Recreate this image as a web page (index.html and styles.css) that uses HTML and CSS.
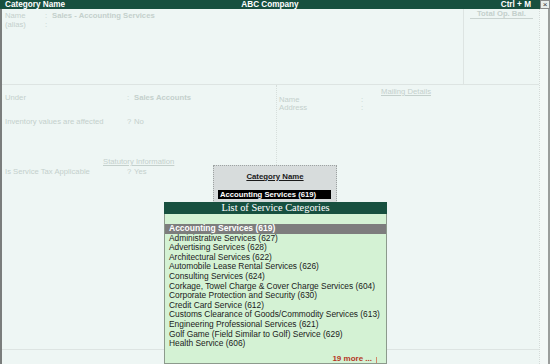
FILE: index.html
```html
<!DOCTYPE html>
<html lang="en">

<head>
  <meta charset="UTF-8">
  <meta name="viewport" content="width=device-width, initial-scale=1.0">
  <title>Category Name</title>
  <link rel="stylesheet" href="styles.css">
</head>

<body>
  <div class="titlebar">
    <span class="tb-left">Category Name</span>
    <span class="tb-center">ABC Company</span>
    <span class="tb-right">Ctrl + M</span>
    <span class="tb-close">&#215;</span>
  </div>

  <div class="screen">
    <div class="main">
      <div class="top">
        <div class="name-block">
          <div class="field"><span class="label short">Name</span><span class="mark">:</span><span class="value bold">Sales - Accounting Services</span></div>
          <div class="field"><span class="label short">(alias)</span><span class="mark">:</span><span class="value"></span></div>
        </div>
        <div class="balance-block">
          <span class="u-head">Total Op. Bal.</span>
        </div>
      </div>

      <div class="mid">
        <div class="group-block">
          <div class="field first"><span class="label">Under</span><span class="mark">:</span><span class="value bold">Sales Accounts</span></div>
          <div class="field"><span class="label">Inventory values are affected</span><span class="mark">?</span><span class="value">No</span></div>
          <div class="section-title"><span class="u-text">Statutory Information</span></div>
          <div class="field"><span class="label">Is Service Tax Applicable</span><span class="mark">?</span><span class="value">Yes</span></div>
        </div>
        <div class="mailing-block">
          <div class="mailing-title"><span class="u-text">Mailing Details</span></div>
          <div class="mfield"><span class="mlabel">Name</span><span>:</span></div>
          <div class="mfield"><span class="mlabel">Address</span><span>:</span></div>
        </div>
      </div>

      <div class="foot"></div>
    </div>
    <div class="side"></div>
  </div>

  <!-- popup shown over the form -->
  <div class="cat-popup">
    <div class="cat-title">Category Name</div>
    <div class="cat-input">Accounting Services (619)</div>
  </div>

  <div class="svc-list">
    <div class="svc-head">List of Service Categories</div>
    <ul class="svc-items">
      <li class="selected">Accounting Services (619)</li>
      <li>Administrative Services (627)</li>
      <li>Advertising Services (628)</li>
      <li>Architectural Services (622)</li>
      <li>Automobile Lease Rental Services (626)</li>
      <li>Consulting Services (624)</li>
      <li>Corkage, Towel Charge &amp; Cover Charge Services (604)</li>
      <li>Corporate Protection and Security (630)</li>
      <li>Credit Card Service (612)</li>
      <li>Customs Clearance of Goods/Commodity Services (613)</li>
      <li>Engineering Professional Services (621)</li>
      <li>Golf Game (Field Similar to Golf) Service (629)</li>
      <li>Health Service (606)</li>
    </ul>
    <div class="svc-more">19 more ...</div>
    <div class="svc-tick"></div>
  </div>
</body>

</html>
```

FILE: styles.css
```css
body {
  margin: 0;
  width: 550px;
  height: 364px;
  overflow: hidden;
  position: relative;
  font-family: "Liberation Sans", Arial, sans-serif;
  background: #eef6f4;
}

.titlebar {
  height: 9px;
  display: grid;
  grid-template-columns: 1fr auto 1fr 10px;
  background-color: #17503f;
  color: white;
  font-size: 8.2px;
  font-weight: bold;
  line-height: 9px;
}

.tb-left {
  padding-left: 5px;
}

.tb-right {
  text-align: right;
  padding-right: 9px;
}

.tb-close {
  background: #e8ecea;
  color: #333;
  border: 1px solid #8a8a8a;
  box-sizing: border-box;
  font-size: 8px;
  line-height: 7px;
  text-align: center;
  font-weight: normal;
}

.screen {
  display: flex;
  height: 355px;
}

.main {
  width: 539px;
  border-left: 2px solid #7a7d7c;
  box-sizing: border-box;
  display: flex;
  flex-direction: column;
  color: #c4d0cc;
  font-size: 7.7px;
}

.top {
  height: 75px;
  display: grid;
  grid-template-columns: 461px 1fr;
  border-bottom: 1px solid #dde4e2;
}

.name-block {
  padding: 2px 0 0 3px;
}

.field {
  display: flex;
  line-height: 9px;
  white-space: nowrap;
}

.label {
  width: 122px;
}

.label.short {
  width: 40px;
}

.mark {
  width: 5px;
}

.value {
  padding-left: 2px;
}

.bold {
  font-weight: bold;
}

.balance-block {
  border-left: 1px solid #dde4e2;
  text-align: center;
  line-height: 9px;
}

.u-head {
  display: inline-block;
  width: 63px;
  font-weight: bold;
  border-bottom: 1px solid #c9d3d0;
  line-height: 8px;
}

.mid {
  height: 264px;
  display: grid;
  grid-template-columns: 274px 1fr;
  border-bottom: 1px solid #dde4e2;
}

.group-block {
  padding: 8px 0 0 3px;
}

.group-block .field {
  margin-bottom: 15px;
}

.section-title {
  padding: 16px 0 0 98px;
  line-height: 9px;
}

.group-block .section-title + .field {
  margin-top: 1px;
}

.u-text {
  text-decoration: underline;
}

.mailing-block {
  border-left: 1px dotted #d6dedb;
  padding: 2px 0 0 2px;
}

.mailing-title {
  text-align: center;
  line-height: 9px;
  padding-right: 6px;
}

.mfield {
  display: flex;
  line-height: 8px;
}

.mlabel {
  width: 82px;
}

.foot {
  flex: 1;
}

.side {
  flex: 1;
  background: #f3f8f7;
  border-left: 1px dotted #d3dbd8;
  border-right: 2px solid #9a9d9c;
}

.cat-popup {
  position: absolute;
  left: 213px;
  top: 165px;
  width: 124px;
  height: 40px;
  box-sizing: border-box;
  background: #d7dcdc;
  border: 1px dotted #9da3a2;
  padding: 6px 0 0 4px;
}

.cat-title {
  text-align: center;
  font-size: 7.8px;
  font-weight: bold;
  text-decoration: underline;
  color: #1a1a1a;
  line-height: 9px;
  padding-right: 4px;
}

.cat-input {
  margin-top: 9px;
  width: 113px;
  height: 9px;
  background: #000;
  color: white;
  font-size: 7.7px;
  font-weight: bold;
  line-height: 9px;
  padding-left: 2px;
  box-sizing: border-box;
}

.svc-list {
  position: absolute;
  left: 164px;
  top: 202px;
  width: 223px;
  height: 162px;
  box-sizing: border-box;
  background: #d4f2d4;
  border: 1px solid #8c9a8c;
  border-top: none;
}

.svc-head {
  height: 12px;
  background: #17503f;
  color: white;
  font-family: "Liberation Serif", "Times New Roman", serif;
  font-size: 10.4px;
  line-height: 12px;
  text-align: center;
  margin: 0 -1px;
}

.svc-items {
  list-style: none;
  margin: 0;
  padding: 10px 0 0 0;
  font-size: 8.4px;
  line-height: 9.6px;
  color: #1b1b1b;
}

.svc-items li {
  padding-left: 4px;
  white-space: nowrap;
}

.svc-items li.selected {
  background: #7d7d7d;
  color: white;
  font-weight: bold;
  font-size: 8.5px;
}

.svc-more {
  position: absolute;
  right: 14px;
  bottom: 0;
  color: #b5371f;
  font-size: 8px;
  font-weight: bold;
  line-height: 9px;
}

.svc-tick {
  position: absolute;
  right: 9px;
  bottom: 0;
  width: 1px;
  height: 6px;
  background: #d08a6a;
}
```
